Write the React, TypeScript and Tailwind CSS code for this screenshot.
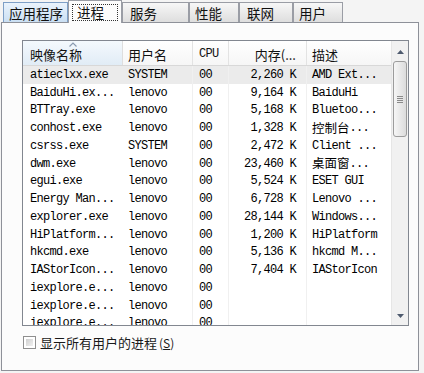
import React from "react";

type Row = { name: string; user: string; cpu: string; mem: string; desc: string };

const rows: Row[] = [
  { name: "atieclxx.exe", user: "SYSTEM", cpu: "00", mem: "2,260 K", desc: "AMD Ext..." },
  { name: "BaiduHi.ex...", user: "lenovo", cpu: "00", mem: "9,164 K", desc: "BaiduHi" },
  { name: "BTTray.exe", user: "lenovo", cpu: "00", mem: "5,168 K", desc: "Bluetoo..." },
  { name: "conhost.exe", user: "lenovo", cpu: "00", mem: "1,328 K", desc: "控制台..." },
  { name: "csrss.exe", user: "SYSTEM", cpu: "00", mem: "2,472 K", desc: "Client ..." },
  { name: "dwm.exe", user: "lenovo", cpu: "00", mem: "23,460 K", desc: "桌面窗..." },
  { name: "egui.exe", user: "lenovo", cpu: "00", mem: "5,524 K", desc: "ESET GUI" },
  { name: "Energy Man...", user: "lenovo", cpu: "00", mem: "6,728 K", desc: "Lenovo ..." },
  { name: "explorer.exe", user: "lenovo", cpu: "00", mem: "28,144 K", desc: "Windows..." },
  { name: "HiPlatform...", user: "lenovo", cpu: "00", mem: "1,200 K", desc: "HiPlatform" },
  { name: "hkcmd.exe", user: "lenovo", cpu: "00", mem: "5,136 K", desc: "hkcmd M..." },
  { name: "IAStorIcon...", user: "lenovo", cpu: "00", mem: "7,404 K", desc: "IAStorIcon" },
  { name: "iexplore.e...", user: "lenovo", cpu: "00", mem: "", desc: "" },
  { name: "iexplore.e...", user: "lenovo", cpu: "00", mem: "", desc: "" },
  { name: "iexplore.e...", user: "lenovo", cpu: "00", mem: "", desc: "" },
];

function T({ s }: { s: string }) {
  const parts = s.split(/([\u4e00-\u9fff]+)/);
  return (
    <>
      {parts.map((p, i) =>
        /[\u4e00-\u9fff]/.test(p) ? (
          <span key={i} className="font-['Noto_Sans_CJK_SC',sans-serif] text-[12.5px] tracking-normal">
            {p}
          </span>
        ) : (
          <React.Fragment key={i}>{p}</React.Fragment>
        )
      )}
    </>
  );
}

function Tab({ label, w, hover }: { label: string; w: string; hover?: boolean }) {
  return (
    <div
      className={
        "h-[20px] border border-b-0 flex items-center pl-[5px] pt-[2px] text-[13.5px] leading-none whitespace-nowrap " +
        w +
        (hover
          ? " border-[#7e9fc6] bg-gradient-to-b from-[#eaf3fc] to-[#cadff3]"
          : " border-[#9a9da5] bg-gradient-to-b from-[#f7f7f7] to-[#dedede]")
      }
    >
      {label}
    </div>
  );
}

export default function App() {
  return (
    <div className="w-[424px] h-[373px] bg-[#f4f4f4] flex flex-col overflow-hidden font-['Noto_Sans_CJK_SC',sans-serif] text-[#111]">
      {/* tabs */}
      <div className="flex items-end h-[22px] pl-[3px] relative z-10">
        <Tab label="应用程序" w="w-[65px]" hover />
        <div className="w-[54px] h-[23px] -mb-px border border-b-0 border-[#9a9da5] bg-[#fcfcfc] flex items-center px-[3px] pt-[1px]">
          <div className="h-[17px] flex-1 border border-dotted border-[#333] flex items-center pl-[4px] text-[13.5px] leading-none">
            进程
          </div>
        </div>
        <Tab label="服务" w="w-[67px] pl-[7px]" />
        <Tab label="性能" w="w-[50px]" />
        <Tab label="联网" w="w-[54px] pl-[7px]" />
        <Tab label="用户" w="w-[50px]" />
      </div>

      {/* panel */}
      <div className="ml-[1px] w-[418px] h-[349px] border border-[#8e9199] bg-[#fcfcfc] flex flex-col">
        {/* list view */}
        <div className="mt-[17px] ml-[20px] w-[387px] h-[286px] border border-[#828790] bg-white flex overflow-hidden">
          <div className="w-[368px] flex flex-col overflow-hidden">
            {/* header */}
            <div className="h-[25px] flex shrink-0 border-b border-[#d8d8d8] bg-gradient-to-b from-white to-[#f6f6f6] text-[13px] leading-none">
              <div className="relative w-[100px] border-r border-[#dedede] bg-gradient-to-b from-[#f4f9fd] to-[#e1ecf6] flex items-center pl-[7px] pt-[2px]">
                <svg className="absolute left-[46px] top-[1px]" width="8" height="5" viewBox="0 0 8 5">
                  <polyline points="0.5,4.5 4,1 7.5,4.5" fill="none" stroke="#8b9bb0" strokeWidth="1.2" />
                </svg>
                映像名称
              </div>
              <div className="w-[70px] border-r border-[#e3e3e3] flex items-center pl-[5px] pt-[2px]">用户名</div>
              <div className="w-[36px] border-r border-[#e3e3e3] flex items-center pl-[6px] pt-[2px] font-['Liberation_Mono',monospace] text-[12px] tracking-[-0.7px]">
                CPU
              </div>
              <div className="w-[78px] border-r border-[#e3e3e3] flex items-center justify-end pr-[10px] pt-[2px]">
                内存(...
              </div>
              <div className="w-[84px] flex items-center pl-[5px] pt-[2px]">描述</div>
            </div>
            {/* rows */}
            <div className="flex flex-col font-['Liberation_Mono','Noto_Sans_CJK_SC',monospace] text-[12px] tracking-[-0.7px] leading-none text-black">
              {rows.map((r, i) => (
                <div
                  key={i}
                  className={"h-[17.75px] shrink-0 flex items-stretch " + (i === 0 ? "bg-[#ebebeb]" : "")}
                >
                  <div className="w-[100px] flex items-center pl-[7px] whitespace-nowrap overflow-hidden">{r.name}</div>
                  <div className="w-[70px] border-r border-[#f0f0f0] flex items-center pl-[5px] whitespace-nowrap">{r.user}</div>
                  <div className="w-[36px] border-r border-[#f0f0f0] flex items-center pl-[6px]">{r.cpu}</div>
                  <div className="w-[78px] border-r border-[#f0f0f0] flex items-center justify-end pr-[10px] whitespace-nowrap">
                    {r.mem}
                  </div>
                  <div className="w-[84px] flex items-center pl-[5px] whitespace-nowrap overflow-hidden">
                    <T s={r.desc} />
                  </div>
                </div>
              ))}
            </div>
          </div>
          {/* scrollbar */}
          <div className="w-[17px] flex flex-col bg-[#f1f1f1] border-l border-[#e6e6e6]">
            <div className="h-[17px] flex items-center justify-center pt-[4px]">
              <svg width="7" height="4" viewBox="0 0 7 4">
                <polygon points="0,4 3.5,0 7,4" fill="#4e5a6e" />
              </svg>
            </div>
            <div className="mt-[3px] mx-[1px] h-[76px] rounded-[3px] border border-[#9c9c9c] bg-gradient-to-r from-[#f6f6f6] to-[#dcdcdc] flex flex-col items-center justify-center gap-[1px]">
              <div className="w-[6px] h-px bg-[#8a8a8a]" />
              <div className="w-[6px] h-px bg-[#8a8a8a]" />
              <div className="w-[6px] h-px bg-[#8a8a8a]" />
              <div className="w-[6px] h-px bg-[#8a8a8a]" />
            </div>
            <div className="flex-1" />
            <div className="h-[17px] flex items-center justify-center pb-[1px]">
              <svg width="7" height="4" viewBox="0 0 7 4">
                <polygon points="0,0 3.5,4 7,0" fill="#4e5a6e" />
              </svg>
            </div>
          </div>
        </div>

        {/* checkbox */}
        <div className="mt-[9px] ml-[21px] flex items-center gap-[4px] h-[14px]">
          <div className="w-[13px] h-[13px] border border-[#8f8f8f] bg-white p-[2px]">
            <div className="w-full h-full bg-gradient-to-br from-[#d0d0d0] to-[#f0f0f0]" />
          </div>
          <div className="text-[13px] leading-none text-[#1a1a1a] whitespace-nowrap">
            显示所有用户的进程
            <span className="text-[12px] ml-[2px]">
              (<span className="underline">S</span>)
            </span>
          </div>
        </div>
      </div>
    </div>
  );
}
